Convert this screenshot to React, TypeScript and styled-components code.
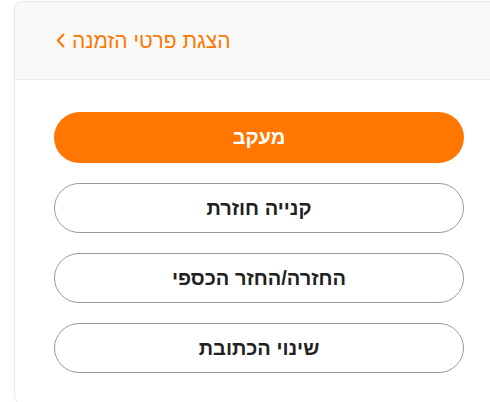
import React from "react";
import styled, { createGlobalStyle } from "styled-components";

const GlobalStyle = createGlobalStyle`
  html, body {
    margin: 0;
    padding: 0;
    background: #ffffff;
    overflow: hidden;
  }
  body {
    font-family: "Liberation Sans", Arial, "DejaVu Sans", sans-serif;
  }
`;

const Card = styled.div`
  margin: 1px 0 0 14px;
  width: 490px;
  box-sizing: border-box;
  border: 1px solid #e8e8e8;
  border-radius: 8px;
  background: #ffffff;
  overflow: hidden;
`;

const Header = styled.div`
  height: 78px;
  box-sizing: border-box;
  background: #f9f9f9;
  border-bottom: 1px solid #ececec;
  display: flex;
  align-items: center;
  padding: 0 0 0 41px;
`;

const BackLink = styled.a`
  display: flex;
  align-items: center;
  gap: 7px;
  color: #fb7800;
  font-size: 21px;
  line-height: 24px;
  text-decoration: none;
  cursor: pointer;
`;

const Title = styled.span`
  direction: rtl;
`;

const Body = styled.div`
  padding: 32px 0 30px 39px;
  display: flex;
  flex-direction: column;
  gap: 20px;
`;

const ActionButton = styled.button<{ $primary?: boolean }>`
  width: 410px;
  height: ${(p) => (p.$primary ? "51px" : "50px")};
  box-sizing: border-box;
  border-radius: 26px;
  border: ${(p) => (p.$primary ? "none" : "1px solid #9a9a9a")};
  background: ${(p) => (p.$primary ? "#ff7700" : "#ffffff")};
  color: ${(p) => (p.$primary ? "#ffffff" : "#222222")};
  font-family: "Liberation Sans", Arial, "DejaVu Sans", sans-serif;
  font-size: 20px;
  font-weight: 700;
  direction: rtl;
  cursor: pointer;
  display: flex;
  align-items: center;
  justify-content: center;
  padding: 0;
`;

const Chevron = () => (
  <svg width="9" height="15" viewBox="0 0 9 15" fill="none">
    <path d="M7.5 1.5 L1.8 7.5 L7.5 13.5" stroke="#fb7800" strokeWidth="2" strokeLinecap="round" strokeLinejoin="round" />
  </svg>
);

export default function App() {
  return (
    <>
      <GlobalStyle />
      <Card>
        <Header>
          <BackLink>
            <Chevron />
            <Title>הצגת פרטי הזמנה</Title>
          </BackLink>
        </Header>
        <Body>
          <ActionButton $primary>מעקב</ActionButton>
          <ActionButton>קנייה חוזרת</ActionButton>
          <ActionButton>החזרה/החזר הכספי</ActionButton>
          <ActionButton>שינוי הכתובת</ActionButton>
        </Body>
      </Card>
    </>
  );
}
